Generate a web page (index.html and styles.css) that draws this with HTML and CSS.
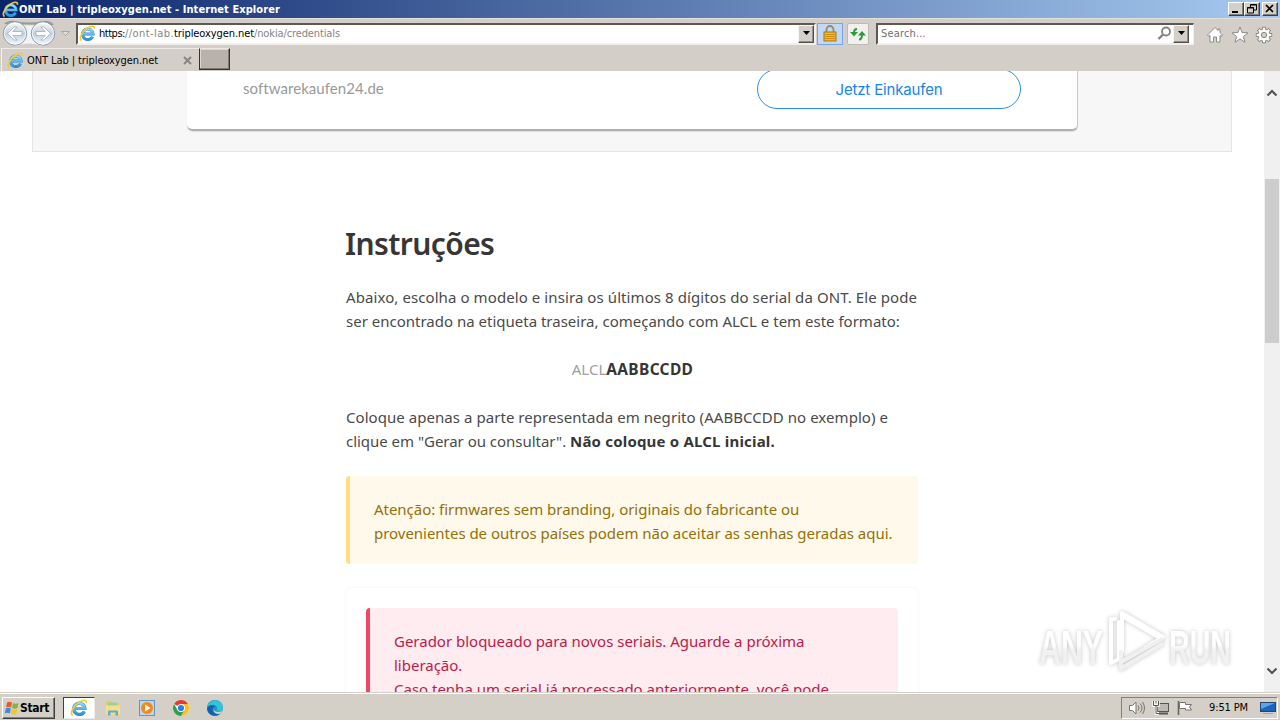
FILE: index.html
```html
<!DOCTYPE html>
<html lang="pt">
<head>
<meta charset="utf-8">
<title>ONT Lab | tripleoxygen.net</title>
<link rel="stylesheet" href="styles.css">
</head>
<body>
<svg class="defs" width="0" height="0">
  <defs>
    <linearGradient id="ieBlue" x1="0" y1="0" x2="0" y2="1"><stop offset="0" stop-color="#8fdcfa"/><stop offset="1" stop-color="#2a93dc"/></linearGradient>
    <linearGradient id="round" x1="0" y1="0" x2="0" y2="1"><stop offset="0" stop-color="#fbfcfd"/><stop offset=".5" stop-color="#c3d0dc"/><stop offset="1" stop-color="#f2faff"/></linearGradient>
    <linearGradient id="fade" x1="0" y1="0" x2="0" y2="1"><stop offset=".45" stop-color="#ffffff"/><stop offset=".55" stop-color="#f1f1f1"/></linearGradient>
    <linearGradient id="edge" x1="0" y1="0" x2="1" y2="1"><stop offset="0" stop-color="#1769b8"/><stop offset=".5" stop-color="#1494d8"/><stop offset="1" stop-color="#4cd07a"/></linearGradient>
    <symbol id="ie" viewBox="0 0 18 18">
      <path d="M14.300 12.400A5.600 5.600 0 1 1 14.900 9.500H5" fill="none" stroke="#2b86cc" stroke-width="3.200"/>
      <path d="M14.300 12.400A5.600 5.600 0 1 1 14.900 9.500H5" fill="none" stroke="url(#ieBlue)" stroke-width="2.300"/>
      <path d="M2.600 16.400C-.6 14 3.500 7 8.500 3.600 12.500 1 17.200.2 16.200 4" fill="none" stroke="#f6c92e" stroke-width="1.700"/>
    </symbol>
  </defs>
</svg>
<div class="screen">
  <header class="titlebar">
    <svg class="ie-title" width="17" height="17"><use href="#ie"/></svg>
    <span class="title">ONT Lab | tripleoxygen.net - Internet Explorer</span>
    <div class="winbtns">
      <i class="wb"><svg width="14" height="12"><path d="M3 9h6" stroke="#000" stroke-width="2"/></svg></i>
      <i class="wb"><svg width="14" height="12"><path d="M5.500 4V1.500h6V7H9M5 2h7M2.500 4.500h6V10h-6zM2 5h7" fill="none" stroke="#000"/></svg></i>
      <i class="wb close"><svg width="14" height="12"><path d="M3 2l7 7M10 2l-7 7" stroke="#000" stroke-width="1.700"/></svg></i>
    </div>
  </header>
  <div class="nav">
    <svg class="backfwd" width="72" height="30" viewBox="0 0 72 30">
      <path d="M4 5Q8 1 15 2q14 3 28 0 7-1 11 4" fill="#9a9a98"/>
      <path d="M15 5q14 3 28 0v22q-14-5-28 0z" fill="#f1f4f7"/>
      <g fill="url(#round)" stroke="#8c9bab" stroke-width="1"><circle cx="15" cy="14.500" r="11.700"/><circle cx="43" cy="14.500" r="11.700"/></g>
      <g fill="none" stroke="#fff" stroke-width="1" opacity=".8"><circle cx="15" cy="14.500" r="10.600"/><circle cx="43" cy="14.500" r="10.600"/></g>
      <g fill="#fff" stroke="#93a5b7" stroke-width=".7"><path d="M7.500 14.500l6.500-6.500h3.200L12.800 12.500H22v4h-9.200l4.400 4.500H14z"/><path d="M50.500 14.500L44 8h-3.200l4.400 4.500H36v4h9.200l-4.400 4.500H44z"/></g>
      <path d="M61.500 12.500h8l-4 4z" fill="#e2deda" stroke="#aaa5a0"/>
    </svg>
    <div class="field address">
      <svg width="17" height="17"><use href="#ie"/></svg>
      <span class="url"><b class="u1">https:</b><span class="u2">//ont-lab.</span><b class="u3">tripleoxygen.net</b><span class="u4">/nokia/credentials</span></span>
      <i class="drop"><svg width="9" height="5"><path d="M1 0h7L4.500 4z"/></svg></i>
    </div>
    <div class="tool lock"><svg width="14" height="17"><path d="M3.500 8V4.500a3.500 3.500 0 0 1 7 0V8" fill="none" stroke="#9b8a5a" stroke-width="1.800"/><rect x="1" y="7" width="12" height="9" fill="#f2b92c" stroke="#a8760f"/><path d="M2 9.500h10M2 11.500h10M2 13.500h10" stroke="#cf8f15"/></svg></div>
    <div class="tool refresh"><svg width="16" height="14" fill="none" stroke="#2e9a38" stroke-width="2"><path d="M7 2Q4 2 4 6"/><path d="M0 5h8L4 9.500z" fill="#2e9a38" stroke="none"/><path d="M9 12.500q3 0 3-5"/><path d="M8 8.500h8L12 4z" fill="#2e9a38" stroke="none"/></svg></div>
    <div class="field search">
      <span class="ph">Search...</span>
      <svg width="15" height="15"><circle cx="9" cy="5.500" r="4" fill="none" stroke="#808080" stroke-width="1.800"/><path d="M6 8.500L1.500 13" stroke="#808080" stroke-width="2.300"/></svg>
      <i class="drop"><svg width="9" height="5"><path d="M1 0h7L4.500 4z"/></svg></i>
    </div>
    <div class="cmds">
      <svg width="18" height="18"><path d="M9 1.500L1.500 9l1 1.300L4 9.500V16h3.500v-5h3v5H14V9.500l1.500.8 1-1.300L14 6.500V3h-2v1.500z" fill="#fff" stroke="#8e8b87"/></svg>
      <svg width="18" height="18"><path d="M9 1l2.100 5.500 5.900.3-4.600 3.700 1.600 5.800L9 13l-5 3.300 1.600-5.800L1 6.800l5.900-.3z" fill="#fff" stroke="#8e8b87"/></svg>
      <svg width="18" height="18"><g stroke="#8e8b87" stroke-width="4"><path d="M9 .8v16.400M.8 9h16.400M3.200 3.200l11.600 11.600M14.800 3.200L3.200 14.800"/></g><circle cx="9" cy="9" r="6.400" fill="#8e8b87"/><g stroke="#fff" stroke-width="2.200"><path d="M9 1.700v14.600M1.700 9h14.600M3.900 3.900l10.200 10.200M14.100 3.900L3.900 14.100"/></g><circle cx="9" cy="9" r="5.500" fill="#fff"/><circle cx="9" cy="9" r="2.700" fill="#d4cec8" stroke="#8e8b87"/></svg>
    </div>
  </div>
  <div class="tabs">
    <div class="tab"><svg width="17" height="17"><use href="#ie"/></svg><span class="tabname">ONT Lab | tripleoxygen.net</span><svg class="x" width="9" height="9"><path d="M1 1l7 7M8 1L1 8" stroke="#87837f" stroke-width="1.900"/></svg></div>
    <div class="newtab"></div>
  </div>
  <div class="view">
    <main class="page">
      <section class="ad">
        <div class="card"><span class="domain">softwarekaufen24.de</span><a class="cta">Jetzt Einkaufen</a></div>
      </section>
      <article class="article">
        <h1>Instruções</h1>
        <p><span class="l1">Abaixo, escolha o modelo e insira os últimos 8 dígitos do serial da ONT. Ele pode</span><br>ser encontrado na etiqueta traseira, começando com ALCL e tem este formato:</p>
        <p class="serial"><span>ALCL</span><b>AABBCCDD</b></p>
        <p><span class="l2">Coloque apenas a parte representada em negrito (AABBCCDD no exemplo) e</span><br><span class="l3">clique em "Gerar ou consultar". </span><b>Não coloque o ALCL inicial.</b></p>
        <div class="note warn">Atenção: firmwares sem branding, originais do fabricante ou<br>provenientes de outros países podem não aceitar as senhas geradas aqui.</div>
        <div class="box"><div class="note danger">Gerador bloqueado para novos seriais. Aguarde a próxima<br>liberação.<br>Caso tenha um serial já processado anteriormente, você pode</div></div>
      </article>
    </main>
    <aside class="scroll">
      <svg width="16" height="16"><path d="M3.500 10.500L8 6l4.500 4.500" fill="none" stroke="#555" stroke-width="2.200"/></svg>
      <div class="thumb"></div>
      <svg width="16" height="16"><path d="M3.500 5.500L8 10l4.500-4.500" fill="none" stroke="#555" stroke-width="2.200"/></svg>
    </aside>
    <svg class="watermark" width="210" height="76" viewBox="0 0 210 76">
      <g class="wm" font-size="48" fill="url(#fade)"><text x="9" y="60" textLength="64" lengthAdjust="spacingAndGlyphs">ANY</text><text x="139" y="60" textLength="62" lengthAdjust="spacingAndGlyphs">RUN</text>
      <g fill="none" stroke="#fff" stroke-width="4" stroke-linejoin="round" stroke-linecap="round"><path d="M92 47V9l41 24-18 11M92 12l38 22"/><path d="M85 15h-4v44l8-4V18"/><path stroke="#f0f0f0" d="M91 48v10l41-23M92 64l40-24M91 58v7"/></g></g>
    </svg>
  </div>
  <footer class="taskbar">
    <div class="start"><svg width="16" height="16" viewBox="0 0 16 16"><path d="M3 2.500q2.500-1.500 5 0L7 7.500q-2.500-1.500-5 0z" fill="#e8582a"/><path d="M9 3q2.500 1.500 5.500 0l-1 5q-3 1.500-5.500 0z" fill="#7fb541"/><path d="M1.800 8.500q2.500-1.500 5 0l-1 5q-2.500-1.500-5 0z" fill="#3c8ad8"/><path d="M7.800 9q2.500 1.500 5.500 0l-1 5q-3 1.500-5.500 0z" fill="#f7c331"/></svg><b>Start</b></div>
    <div class="task on"><svg width="18" height="18"><use href="#ie"/></svg></div>
    <div class="task"><svg width="18" height="18"><path d="M2 2h5l1 2h7v12H2z" fill="#eec95a"/><path d="M4 3.500h9v4H4z" fill="#9bd19a"/><path d="M2 6.500h14v9H2z" fill="#f5df8c"/><path d="M4 16.500v-4q0-1 1-1h8q1 0 1 1v4h-2.500v-3h-5v3z" fill="#5badd9"/></svg></div>
    <div class="task"><svg width="18" height="18"><rect x="1.500" y="1.500" width="15" height="15" fill="#b9d7f1" stroke="#6396c8"/><circle cx="9" cy="9" r="6" fill="#f28a1a"/><path d="M7 5.500v7L12.500 9z" fill="#fff"/></svg></div>
    <div class="task"><svg width="18" height="18" viewBox="0 0 18 18"><circle cx="9" cy="9" r="8" fill="#fff"/><path d="M9 9L2.070 5A8 8 0 0 1 15.930 5H9z" fill="#e33b2e"/><path d="M9 5h6.930A8 8 0 0 1 9 17l3.460-6z" fill="#fbc116"/><path d="M2.070 5A8 8 0 0 0 9 17l3.460-6H5.540z" fill="#2da24c"/><circle cx="9" cy="9" r="4" fill="#fff"/><circle cx="9" cy="9" r="3.100" fill="#3979e8"/></svg></div>
    <div class="task"><svg width="18" height="18" viewBox="0 0 18 18"><circle cx="9" cy="9" r="8" fill="url(#edge)"/><path d="M1 8.500C2 3 7 .8 11 1.500c4 .7 6 4 6 7.500 0 3-4 3.500-6 2 1-3-1-5-4-5S2 7 1 8.500z" fill="#35c1d8"/><path d="M7.500 8C5 12 8 16 14 14.500 10 19 2 16.500 1 10 2 6 7 5 9 8z" fill="#1760ae"/><path d="M8 8.500q-1 4 3.500 4.500 2.500.3 5-1l-2 2.500Q9 16 7.500 11.500z" fill="#d4d0c8"/></svg></div>
    <div class="tray">
      <svg width="18" height="16" fill="none" stroke="#77736e"><path d="M1.500 5.500h3L8 2v12l-3.500-3.500h-3z" fill="#fff"/><path d="M10 5.500q2 2.500 0 5M12 3.500q4 4.500 0 9M14.500 2q4 6 0 12"/></svg>
      <svg width="18" height="16"><rect x="5.500" y="3.500" width="11" height="8" fill="#bcb8b2" stroke="#555"/><path d="M7 13.500h9" stroke="#555" stroke-width="2"/><path d="M1.500 1v4.500h5V1M4 1v3M4 6v7.500h3" fill="none" stroke="#fff" stroke-width="2.400"/><path d="M1.500 1v4.500h5V1M4 1v2.500M4 6v7.500h3" fill="none" stroke="#555"/></svg>
      <svg width="17" height="16"><path d="M2.500 1v14" stroke="#666" stroke-width="1.600"/><path d="M3.500 2.500h6v2h6l-2 2.500 2 3H9.500V8.500h-6z" fill="#fff" stroke="#77736e"/></svg>
      <span class="time">9:51 PM</span>
      <svg width="16" height="14"><rect x=".5" y="1.500" width="15" height="9" fill="#1b64c0" stroke="#214574"/><path d="M1 2h14L1 8z" fill="#5ba4e8"/><path d="M3 12.500h10" stroke="#8ca9c5"/></svg>
    </div>
  </footer>
</div>
</body>
</html>
```
FILE: styles.css
```css
*{box-sizing:border-box}
body{margin:0;background:#d4d0c8}
i{font-style:normal}
svg{display:block;flex:none}
.defs{position:absolute}
.screen{width:1280px;height:720px;display:flex;flex-direction:column;overflow:hidden;font:11px/14px "DejaVu Sans Condensed","DejaVu Sans",sans-serif;color:#000;white-space:nowrap;background:#d4cec8}
.titlebar{height:18px;flex:none;display:flex;align-items:center;padding:0 2px;background:linear-gradient(90deg,#0a246a,#a6caf0)}
.title{color:#fff;font-weight:700;letter-spacing:.08px;flex:1;padding-top:1px}
.winbtns{display:flex}
.wb{width:16px;height:14px;background:#d4d0c8;border:1px solid;border-color:#fff #404040 #404040 #fff;box-shadow:inset -1px -1px #808080;display:block}
.close{margin-left:2px}
.nav{height:30px;flex:none;display:flex;align-items:center;background:#d4cec8;border-top:1px solid #e4dfda}
.backfwd{margin-right:4px}
.field{height:22px;background:#fff;border:2px solid;border-color:#5d5853 #f3f0ec #f3f0ec #5d5853;display:flex;align-items:center}
.address{width:740px;padding-left:1px}
.url{margin-left:3px;padding-top:1px;flex:1;color:#858585;display:flex}
.url b{font-weight:400;color:#000}
.u1{letter-spacing:-.47px}
.u2{letter-spacing:.43px}
.u3{letter-spacing:-.08px}
.u4{letter-spacing:-.12px}
.drop{width:16px;height:18px;background:#d4d0c8;border:1px solid;border-color:#f5f5f5 #505050 #505050 #f5f5f5;box-shadow:inset -1px -1px #909090;display:flex;align-items:center;justify-content:center}
.tool{height:22px;display:flex;align-items:center;justify-content:center}
.lock{width:26px;margin-left:1px;background:#c1d9f6;border:1px solid #76a5df}
.refresh{width:22px;margin-left:4px;background:#f1f0ee;border:1px solid #bdb9b4;border-radius:2px}
.search{width:318px;margin-left:7px;padding:0 4px 0 3px;border-right-width:1px}
.ph{flex:1;color:#707070;letter-spacing:.17px;padding-top:1px}
.search svg{margin-right:1px}
.search .drop svg{margin:0}
.cmds{display:flex;gap:7px;margin:3px 0 0 12px}
.cmds svg:last-child{margin-left:-1px}
.tabs{height:23px;flex:none;display:flex;background:#d4cec8}
.tab{width:198px;height:23px;margin-left:1px;border-left:1px solid #f4f1ee;border-top:1px solid #efebe7;display:flex;align-items:center;padding-left:5px}
.tabname{margin-left:3px;padding-top:1px;letter-spacing:-.08px}
.x{margin-left:25px}
.newtab{width:31px;height:22px;background:#b9b2ab;border:1px solid #35312e;border-top-color:#eae6e2;box-shadow:inset -1px -1px #807a74,inset 1px 1px #dcd7d2}
.view{height:621px;flex:none;display:flex;background:#fff;position:relative;overflow:hidden}
.page{width:1264px;height:621px;overflow:hidden}
.ad{width:1200px;height:81px;margin-left:32px;background:#f7f7f7;border:1px solid #e4e4e4;border-top:0;padding-left:154px}
.card{width:891px;height:60px;background:#fff;border-radius:0 0 6px 6px;border-right:1px solid #c8c8c8;border-bottom:2px solid #b0b0b0;box-shadow:0 1px 1px #dedede;display:flex;justify-content:space-between;padding:0 56px}
.domain{font:15px/35px Lato,sans-serif;color:#999;letter-spacing:.06px}
.cta{width:264px;height:40px;margin-top:-2px;border:1px solid #2a8ee4;border-radius:20px;text-align:center;font:15px/39px Inter,sans-serif;letter-spacing:-.16px;color:#1a84e4}
.article{width:572px;margin:0 0 0 346px;padding-top:72px;font:15px/24px "Noto Sans","Open Sans",sans-serif;color:#4a4a4a}
h1{margin:0 0 21px -1px;font:600 30px/40px "Noto Sans",sans-serif;letter-spacing:-.6px;color:#363636}
p{margin:0 0 24px}
p b{color:#363636;letter-spacing:.19px}
.l1{letter-spacing:.085px}
.l2{letter-spacing:.052px}
.l3{letter-spacing:-.027px}
.serial{text-align:center;padding-left:1px}
.serial span{color:#a0a0a0}
.serial b{font-size:15.5px;letter-spacing:.33px}
.note{border-left:4px solid #ffdd80;border-radius:4px;background:#fff9eb;color:#947009;padding:20px 24px}
.warn{height:88px;margin-top:-1px;padding-top:21px;letter-spacing:-.03px}
.box{margin-top:24px;padding:20px;height:200px;border-radius:6px;box-shadow:0 0 3px rgba(10,10,10,.06)}
.danger{background:#feecf0;border-color:#f14668;color:#bd1a48;height:170px;padding-top:21px;letter-spacing:-.01px}
.scroll{width:16px;height:621px;background:#f0f0f0;display:flex;flex-direction:column;padding:14px 0 13px}
.thumb{width:14px;height:164px;margin:78px 0 auto 1px;background:#cdcdcd}
.watermark{position:absolute;left:1030px;top:533px}
.wm{font-family:"Liberation Sans",sans-serif;font-weight:700;filter:drop-shadow(0 0 2px #c4c4c4)}
.taskbar{height:28px;flex:none;display:flex;align-items:center;padding:2px 2px 0;background:#d4d0c8;border-top:1px solid #d4d0c8;box-shadow:inset 0 1px #fff}
.start{width:53px;height:22px;border:1px solid;border-color:#fff #404040 #404040 #fff;box-shadow:inset -1px -1px #808080;display:flex;align-items:center;padding-left:1px}
.start b{font-size:12px;letter-spacing:-.3px}
.task{width:34px;height:22px;display:flex;align-items:center;justify-content:center}
.on{width:32px;margin:0 1px 0 8px;background:#fff;border:1px solid;border-color:#404040 #eee #eee #404040}
.tray{height:22px;width:157px;margin-left:auto;display:flex;align-items:center;border:1px solid;border-color:#808080 #fff #fff #808080;padding-left:6px;gap:6px}
.time{margin:0 6px 0 10px;letter-spacing:-.12px}
```
